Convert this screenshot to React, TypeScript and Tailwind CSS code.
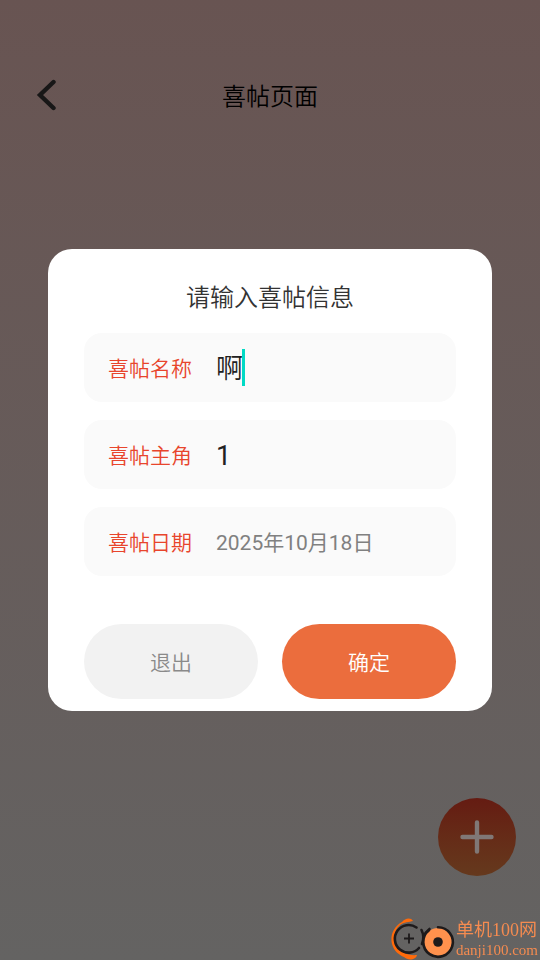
import { ReactNode, useState } from "react";

const Field = ({
  id,
  label,
  children,
}: {
  id: string;
  label: string;
  children: ReactNode;
}) => {
  return (
    <div className="flex h-[69px] items-center gap-6 rounded-[18px] bg-[#fafafa] px-6">
      <label htmlFor={id} className="shrink-0 pt-1 text-[21px] text-[#e8452c]">
        {label}
      </label>
      <div className="flex min-w-0 flex-1 items-center">{children}</div>
    </div>
  );
};

const BackIcon = () => (
  <svg width="20" height="32" viewBox="0 0 20 32" fill="none" aria-hidden="true">
    <path
      d="M17.5 3L4 16L17.5 29"
      stroke="#181717"
      strokeWidth="4.4"
      strokeLinecap="round"
    />
  </svg>
);

const PlusIcon = () => (
  <svg width="34" height="34" viewBox="0 0 34 34" aria-hidden="true">
    <path
      d="M17 2.5V31.5M2.5 17H31.5"
      stroke="#807876"
      strokeWidth="4.4"
      strokeLinecap="round"
    />
  </svg>
);

const SiteLogo = () => (
  <svg width="65" height="42" viewBox="0 0 65 42" fill="none" aria-hidden="true">
    <path
      d="M22 3C20 -1 14 0 11 4C2 9 -1 18 1 26C3 33 8 37 13 39C17 43 25 42 26 37C17 38 9 34 6 28C2 20 3 12 9 7C13 4 18 4 22 3Z"
      fill="#ff6a0a"
    />
    <path
      d="M25.5 9.5A13.8 13.8 0 1 0 28 30"
      stroke="#1d1a1b"
      strokeWidth="2.6"
      strokeLinecap="round"
    />
    <path d="M18 15.5V25.5M13 20.5H23" stroke="#1d1a1b" strokeWidth="1.8" />
    <path
      d="M30.5 12C32.5 16 33 21 31 26M38.5 11C36 13 34 15 33 18"
      stroke="#1d1a1b"
      strokeWidth="2.6"
      strokeLinecap="round"
    />
    <circle cx="47" cy="24" r="14" fill="#ff914d" />
    <path
      d="M47 9.2A14.8 14.8 0 1 1 38 12.3"
      stroke="#1d1a1b"
      strokeWidth="2.6"
      strokeLinecap="round"
    />
    <circle cx="47" cy="24" r="4.8" fill="#1d1a1b" />
  </svg>
);

const App = () => {
  const [name, setName] = useState("啊");
  const [people, setPeople] = useState("1");

  return (
    <div
      lang="zh-CN"
      className="relative min-h-screen bg-linear-to-b from-[#685452] to-[#646362] font-['Roboto','Noto_Sans_CJK_SC',sans-serif] font-[350]"
    >
      <header className="grid grid-cols-[1fr_auto_1fr] items-center px-9 pt-[75px]">
        <button type="button" aria-label="返回" className="justify-self-start">
          <BackIcon />
        </button>
        <h1 className="pt-1 text-[24px] leading-9 text-black">喜帖页面</h1>
      </header>

      <button
        type="button"
        aria-label="新建喜帖"
        className="fixed right-6 bottom-[84px] flex size-[78px] items-center justify-center rounded-full bg-linear-to-b from-[#651b12] to-[#65391d]"
      >
        <PlusIcon />
      </button>

      <div className="fixed inset-0 flex items-center justify-center px-12">
        <form
          role="dialog"
          aria-labelledby="dialog-title"
          onSubmit={(e) => e.preventDefault()}
          className="w-full rounded-3xl bg-white px-9 pt-[31px] pb-3"
        >
          <h2
            id="dialog-title"
            className="text-center text-[24px] leading-9 text-[#333333]"
          >
            请输入喜帖信息
          </h2>

          <div className="mt-[17px] flex flex-col gap-[18px]">
            <Field id="name" label="喜帖名称">
              <input
                id="name"
                value={name}
                onChange={(e) => setName(e.target.value)}
                className="field-sizing-content max-w-full pt-1 text-[27px] text-[#212121] caret-transparent outline-none"
              />
              <span className="-ml-px h-[37px] w-[3px] shrink-0 bg-[#00dac5]" />
            </Field>
            <Field id="people" label="喜帖主角">
              <input
                id="people"
                value={people}
                onChange={(e) => setPeople(e.target.value)}
                className="w-full pt-1 text-[27px] font-normal text-[#212121] outline-none"
              />
            </Field>
            <Field id="date" label="喜帖日期">
              <input
                id="date"
                readOnly
                value="2025年10月18日"
                className="w-full pt-1 text-[21px] font-normal text-[#808080] outline-none"
              />
            </Field>
          </div>

          <div className="mt-12 grid grid-cols-2 gap-6">
            <button
              type="button"
              className="h-[75px] rounded-full bg-[#f2f2f2] pt-1 text-[21px] text-[#8a8a8a]"
            >
              退出
            </button>
            <button
              type="submit"
              className="h-[75px] rounded-full bg-[#eb6d3d] pt-1 text-[21px] text-white"
            >
              确定
            </button>
          </div>
        </form>
      </div>

      <div className="fixed right-0.5 bottom-0 flex items-end font-normal text-[#f58b50]">
        <SiteLogo />
        <div className="font-['Liberation_Serif','Noto_Sans_CJK_SC',serif] whitespace-nowrap">
          <p className="text-[18px] leading-5">单机100网</p>
          <p className="text-[15px] leading-5">danji100.com</p>
        </div>
      </div>
    </div>
  );
};

export default App;
